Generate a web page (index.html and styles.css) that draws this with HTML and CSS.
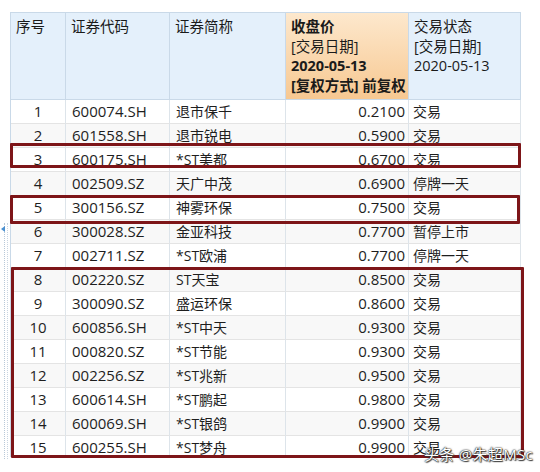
FILE: index.html
```html
<!DOCTYPE html>
<html lang="zh-CN">
<head>
<meta charset="utf-8">
<link rel="stylesheet" href="styles.css">
</head>
<body>
<div class="page">
  <div class="gutter">
    <div class="gutter-mark"></div>
  </div>
  <div class="table-wrap">
    <div class="grid">
      <div class="hd">序号</div>
      <div class="hd">证券代码</div>
      <div class="hd">证券简称</div>
      <div class="hd hd-sort"><b>收盘价</b><br>[交易日期]<br><b>2020-05-13</b><br><b>[复权方式] 前复权</b></div>
      <div class="hd">交易状态<br>[交易日期]<br>2020-05-13</div>

      <div class="c n">1</div><div class="c code">600074.SH</div><div class="c name">退市保千</div><div class="c price">0.2100</div><div class="c st">交易</div>
      <div class="c n alt">2</div><div class="c code alt">601558.SH</div><div class="c name alt">退市锐电</div><div class="c price alt">0.5900</div><div class="c st alt">交易</div>
      <div class="c n">3</div><div class="c code">600175.SH</div><div class="c name">*ST美都</div><div class="c price">0.6700</div><div class="c st">交易</div>
      <div class="c n alt">4</div><div class="c code alt">002509.SZ</div><div class="c name alt">天广中茂</div><div class="c price alt">0.6900</div><div class="c st alt">停牌一天</div>
      <div class="c n">5</div><div class="c code">300156.SZ</div><div class="c name">神雾环保</div><div class="c price">0.7500</div><div class="c st">交易</div>
      <div class="c n alt">6</div><div class="c code alt">300028.SZ</div><div class="c name alt">金亚科技</div><div class="c price alt">0.7700</div><div class="c st alt">暂停上市</div>
      <div class="c n">7</div><div class="c code">002711.SZ</div><div class="c name">*ST欧浦</div><div class="c price">0.7700</div><div class="c st">停牌一天</div>
      <div class="c n alt">8</div><div class="c code alt">002220.SZ</div><div class="c name alt">ST天宝</div><div class="c price alt">0.8500</div><div class="c st alt">交易</div>
      <div class="c n">9</div><div class="c code">300090.SZ</div><div class="c name">盛运环保</div><div class="c price">0.8600</div><div class="c st">交易</div>
      <div class="c n alt">10</div><div class="c code alt">600856.SH</div><div class="c name alt">*ST中天</div><div class="c price alt">0.9300</div><div class="c st alt">交易</div>
      <div class="c n">11</div><div class="c code">000820.SZ</div><div class="c name">*ST节能</div><div class="c price">0.9300</div><div class="c st">交易</div>
      <div class="c n alt">12</div><div class="c code alt">002256.SZ</div><div class="c name alt">*ST兆新</div><div class="c price alt">0.9500</div><div class="c st alt">交易</div>
      <div class="c n">13</div><div class="c code">600614.SH</div><div class="c name">*ST鹏起</div><div class="c price">0.9800</div><div class="c st">交易</div>
      <div class="c n alt">14</div><div class="c code alt">600069.SH</div><div class="c name alt">*ST银鸽</div><div class="c price alt">0.9900</div><div class="c st alt">交易</div>
      <div class="c n">15</div><div class="c code">600255.SH</div><div class="c name">*ST梦舟</div><div class="c price">0.9900</div><div class="c st">交易</div>
    </div>
  </div>
  <div class="box box1"></div>
  <div class="box box2"></div>
  <div class="box box3"></div>
  <div class="watermark">头条 @朱超MSc</div>
</div>
</body>
</html>
```
FILE: styles.css
```css
* { box-sizing: border-box; }
html, body { margin: 0; padding: 0; background: #ffffff; }
body {
  font-family: "Open Sans", "Noto Sans CJK SC", sans-serif;
  font-size: 15px;
  color: #1e1e1e;
}
.page {
  position: relative;
  width: 540px;
  height: 472px;
  display: flex;
  padding-top: 12px;
}
.gutter {
  width: 10px;
  padding-top: 211px;
  padding-left: 4px;
}
.gutter-mark {
  width: 4px;
  height: 236px;
  border-left: 1px dotted #b8c8d8;
  border-right: 1px dotted #c8d4e0;
  position: relative;
}
.gutter-mark::before {
  content: "";
  position: absolute;
  left: -4px;
  top: 3px;
  border-right: 4px solid #4a90d0;
  border-top: 3px solid transparent;
  border-bottom: 3px solid transparent;
}
.table-wrap {
  width: 511px;
  height: 445px;
  overflow: hidden;
  border-left: 1px solid #c9d9e8;
  border-top: 1px solid #c9d9e8;
}
.grid {
  display: grid;
  grid-template-columns: 55px 104px 116px 123px 112px;
  grid-template-rows: 87px;
  grid-auto-rows: 24px;
}
.hd {
  background: #e4f0fb;
  border-right: 1px solid #c9d9e8;
  border-bottom: 1px solid #c9d9e8;
  padding: 4px 4px 0 5px;
  line-height: 19.5px;
  font-size: 14.5px;
  color: #1a1a1a;
  white-space: nowrap;
}
.hd b { font-weight: 700; }
.hd-sort {
  background: linear-gradient(#fde8cd, #f7c891);
}
.c {
  border-right: 1px solid #dde4ea;
  border-bottom: 1px solid #e4e4e4;
  line-height: 23px;
  white-space: nowrap;
  background: #ffffff;
}
.c.alt { background: #f8f8f8; }
.n { text-align: center; }
.code { padding-left: 6px; }
.name { padding-left: 6px; }
.name, .st { font-size: 14px; }
.price { text-align: right; padding-right: 3px; }
.st { padding-left: 4px; }
.box {
  position: absolute;
  border: 3px solid #7d1518;
  border-radius: 1px;
}
.box1 { left: 10px; top: 143px; width: 511px; height: 25px; }
.box2 { left: 10px; top: 195px; width: 510px; height: 29px; }
.box3 { left: 11px; top: 267px; width: 513px; height: 191px; }
.watermark {
  position: absolute;
  left: 424px;
  top: 443px;
  font-size: 15px;
  letter-spacing: 0.3px;
  color: #ffffff;
  text-shadow: 0 0 2px #222, 0 0 1px #000, 1px 1px 1px #444;
  white-space: nowrap;
}
```
